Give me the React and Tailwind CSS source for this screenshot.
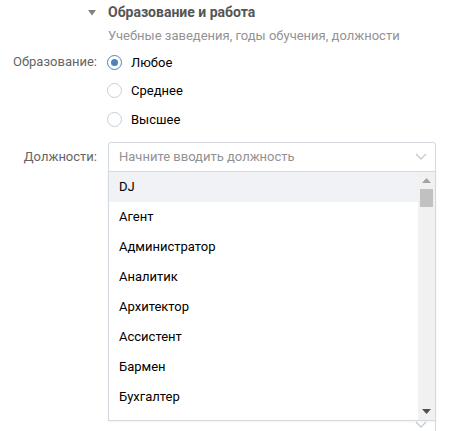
import React from 'react';

const positions = [
  'DJ',
  'Агент',
  'Администратор',
  'Аналитик',
  'Архитектор',
  'Ассистент',
  'Бармен',
  'Бухгалтер',
];

const Chevron = () => (
  <svg width="12" height="7" viewBox="0 0 12 7" fill="none">
    <path d="M1 1l5 5 5-5" stroke="#c5cbd1" strokeWidth="1.4" />
  </svg>
);

const Radio = ({ checked, label }) => (
  <label className="flex items-center h-[28.5px] gap-[9px] -ml-px">
    <span
      className={
        checked
          ? 'w-[15px] h-[15px] rounded-full border border-[#5181b8] flex items-center justify-center'
          : 'w-[15px] h-[15px] rounded-full border border-[#c5d0db]'
      }
    >
      {checked && <span className="w-[7px] h-[7px] rounded-full bg-[#5181b8]" />}
    </span>
    <span className="text-black">{label}</span>
  </label>
);

const App = () => {
  return (
    <div className="w-[457px] h-[431px] overflow-hidden bg-white font-['Roboto',sans-serif] text-[13px] pt-[3px]">
      <div className="grid grid-cols-[97px_327px] gap-x-[11px]">
        {/* section header */}
        <div className="flex justify-end items-center pr-[1px] h-[19px]">
          <svg width="8" height="6" viewBox="0 0 8 6">
            <path d="M0 0h8L4 5.5z" fill="#828282" />
          </svg>
        </div>
        <div className="text-[14px] font-bold text-[#555] leading-[19px]">Образование и работа</div>

        <div />
        <div className="text-[#939393] leading-[18px] mt-[5px]">
          Учебные заведения, годы обучения, должности
        </div>

        {/* education level */}
        <div className="text-right text-[#656565] leading-[28.5px] mt-[3px]">Образование:</div>
        <div className="mt-[3px]">
          <Radio checked label="Любое" />
          <Radio label="Среднее" />
          <Radio label="Высшее" />
        </div>

        {/* positions */}
        <div className="text-right text-[#656565] leading-[29px] mt-[8px]">Должности:</div>
        <div className="relative mt-[8px] w-[328px]">
          <div className="h-[30px] border border-[#d3d9de] rounded-t-[3px] flex items-center justify-between pl-[10px] pr-[8px]">
            <span className="text-[#929292]">Начните вводить должность</span>
            <Chevron />
          </div>

          <div className="mt-[238px] ml-[202px] h-[30px] border-r border-[#d3d9de] bg-white flex justify-end items-start pt-[11px] pr-[8px]">
            <Chevron />
          </div>

          {/* suggestions menu */}
          <div className="absolute left-0 top-[29px] w-[328px] h-[250px] border border-[#d3d9de] bg-white flex shadow-[0_1px_2px_rgba(0,0,0,0.05)]">
            <ul className="flex-1 overflow-hidden">
              {positions.map((p, i) => (
                <li
                  key={p}
                  className={
                    i === 0
                      ? 'h-[30px] flex items-center pl-[10px] text-black bg-[#f0f2f5]'
                      : 'h-[30px] flex items-center pl-[10px] text-black'
                  }
                >
                  {p}
                </li>
              ))}
            </ul>
            <div className="w-[17px] bg-[#f1f1f1] flex flex-col items-center">
              <svg className="mt-[6px]" width="9" height="5" viewBox="0 0 9 5">
                <path d="M0 5h9L4.5 0z" fill="#a3a3a3" />
              </svg>
              <div className="mt-[6px] w-[13px] h-[18px] bg-[#c1c1c1]" />
              <div className="flex-1" />
              <svg className="mb-[6px]" width="9" height="5" viewBox="0 0 9 5">
                <path d="M0 0h9L4.5 5z" fill="#505050" />
              </svg>
            </div>
          </div>
        </div>
      </div>
    </div>
  );
};

export default App;
